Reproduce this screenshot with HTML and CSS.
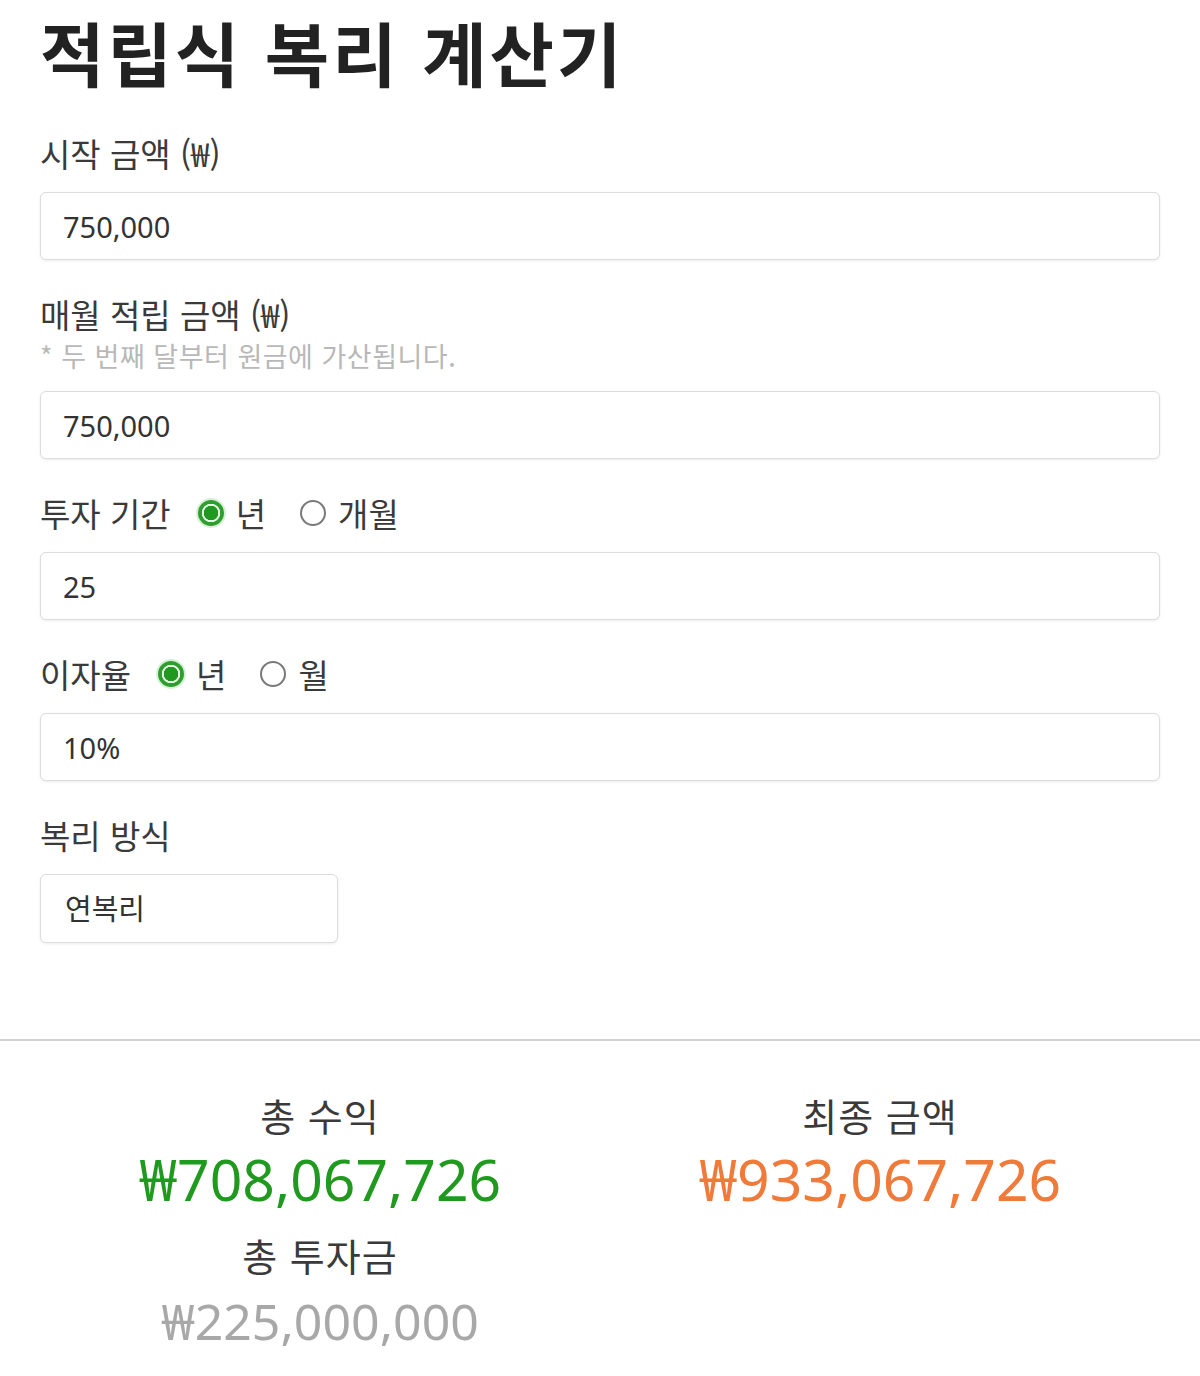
FILE: index.html
```html
<!DOCTYPE html>
<html lang="ko">
<head>
<meta charset="utf-8">
<title>적립식 복리 계산기</title>
<link rel="stylesheet" href="styles.css">
</head>
<body>

<div id="calcform">
  <h1>적립식 복리 계산기</h1>

  <label class="flabel" for="startamt">시작 금액 (₩)</label>
  <input type="text" class="ftext" id="startamt" value="750,000">

  <label class="flabel withhint" for="monthamt">매월 적립 금액 (₩)</label>
  <div class="hint">* 두 번째 달부터 원금에 가산됩니다.</div>
  <input type="text" class="ftext" id="monthamt" value="750,000">

  <div class="flabel radiorow">
    <span class="rname">투자 기간</span>
    <label><input type="radio" name="period" checked> 년</label>
    <label><input type="radio" name="period"> 개월</label>
  </div>
  <input type="text" class="ftext" id="period" value="25">

  <div class="flabel radiorow">
    <span class="rname">이자율</span>
    <label><input type="radio" name="rate" checked> 년</label>
    <label><input type="radio" name="rate"> 월</label>
  </div>
  <input type="text" class="ftext" id="rate" value="10%">

  <label class="flabel" for="compound">복리 방식</label>
  <select id="compound" class="fselect">
    <option>연복리</option>
    <option>월복리</option>
  </select>
</div>

<div id="results">
  <div class="rescol">
    <div class="reslabel">총 수익</div>
    <div class="resvalue profit">₩708,067,726</div>
    <div class="reslabel">총 투자금</div>
    <div class="resvalue invested">₩225,000,000</div>
  </div>
  <div class="rescol">
    <div class="reslabel">최종 금액</div>
    <div class="resvalue final">₩933,067,726</div>
  </div>
</div>

</body>
</html>
```

FILE: styles.css
```css
body { margin: 0; background: #fff; color: #333; font-family: "Noto Sans", "Noto Sans CJK KR", sans-serif; }

#calcform { padding: 0 40px 64px 40px; }
#calcform h1 { margin: 0 0 27px 0; font-size: 70px; line-height: 104px; letter-spacing: 3px; font-weight: bold; color: #222; font-family: "Noto Sans CJK KR", sans-serif; }

.flabel { display: block; font-size: 33px; line-height: 44px; margin: 0 0 17px 0; color: #3a3a3a; font-family: "Noto Sans CJK KR", sans-serif; }
.flabel.withhint { margin-bottom: 2px; }
.hint { font-size: 27px; line-height: 36px; color: #b8b8b8; margin-bottom: 17px; letter-spacing: 0.5px; font-family: "Noto Sans CJK KR", sans-serif; }

.ftext, .fselect { display: block; box-sizing: border-box; height: 68px; border: 1px solid #dcdcdc; border-radius: 6px; background: #fff;
    box-shadow: 0 1px 3px rgba(0,0,0,0.08); padding: 0 22px; font-size: 29px; color: #333; font-family: "Noto Sans", "Noto Sans CJK KR", sans-serif; margin: 0 0 32px 0; outline: none; }
.ftext { width: 100%; }
.fselect { width: 298px; height: 69px; appearance: none; -webkit-appearance: none; padding: 0 24px; margin-top: 2px; }

.radiorow { display: flex; align-items: center; }
.radiorow .rname { margin-right: 27px; }
.radiorow label { display: flex; align-items: center; gap: 12px; margin-right: 34px; }
.radiorow input[type="radio"] { appearance: none; -webkit-appearance: none; margin: 0; width: 26px; height: 26px; border-radius: 50%;
    border: 2px solid #7a7a7a; background: #fff; box-sizing: border-box; }
.radiorow input[type="radio"]:checked { border: 2px solid #2f9e2f; background: radial-gradient(circle, #1f9a1f 0 7px, #e6f6e6 7.5px 9px, #2f9e2f 9.5px);
    box-shadow: 0 0 0 2px #d6f0d6; }

#results { border-top: 2px solid #d0d0d0; margin: 0; padding: 52px 40px 20px 40px; display: grid; grid-template-columns: 1fr 1fr; }
.rescol { text-align: center; }
.reslabel { font-size: 38px; line-height: 44px; letter-spacing: 1px; color: #3a3a3a; font-family: "Noto Sans CJK KR", sans-serif; }
.resvalue { font-size: 57px; line-height: 68px; margin: 8px 0 20px 0; }
.resvalue.profit { color: #1f9a1f; }
.resvalue.final { color: #f07a3a; }
.resvalue.invested { color: #a8a8a8; font-size: 50px; margin-top: 10px; }
```
